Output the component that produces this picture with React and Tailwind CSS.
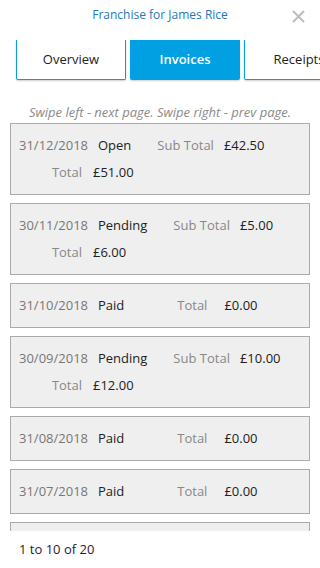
import React from "react";

const invoices = [
  { date: "31/12/2018", status: "Open", sub: "£42.50", total: "£51.00" },
  { date: "30/11/2018", status: "Pending", sub: "£5.00", total: "£6.00" },
  { date: "31/10/2018", status: "Paid", total: "£0.00" },
  { date: "30/09/2018", status: "Pending", sub: "£10.00", total: "£12.00" },
  { date: "31/08/2018", status: "Paid", total: "£0.00" },
  { date: "31/07/2018", status: "Paid", total: "£0.00" },
];

function InvoiceCard({ inv }) {
  const paid = !inv.sub;
  return (
    <div className="shrink-0 border border-[#aaaaaa] bg-[#efefef] py-[8px] pl-[8px] text-[13px]">
      <div className="flex h-[27px] items-center whitespace-nowrap">
        <span className="text-[#777]">{inv.date}</span>
        <span className="ml-[10px] text-[#222]">{inv.status}</span>
        {paid ? (
          <>
            <span className="ml-[53px] text-[#888]">Total</span>
            <span className="ml-[17px] text-[#222]">{inv.total}</span>
          </>
        ) : (
          <>
            <span className="ml-[26px] text-[#888]">Sub Total</span>
            <span className="ml-[10px] text-[#222]">{inv.sub}</span>
          </>
        )}
      </div>
      {!paid && (
        <div className="flex h-[27px] items-center whitespace-nowrap">
          <span className="w-[63px] text-right text-[#888]">Total</span>
          <span className="ml-[11px] text-[#222]">{inv.total}</span>
        </div>
      )}
    </div>
  );
}

export default function App() {
  const tabs = ["Overview", "Invoices", "Receipts"];
  return (
    <div
      className="relative h-[568px] w-[320px] overflow-hidden bg-white"
      style={{ fontFamily: '"Open Sans", "Liberation Sans", sans-serif' }}
    >
      {/* header */}
      <div className="flex h-[30px] items-center justify-center">
        <span className="text-[12px] text-[#1f77bb]">Franchise for James Rice</span>
      </div>
      <button className="absolute right-[15px] top-[10px] h-[13px] w-[13px]">
        <svg viewBox="0 0 13 13" width="13" height="13">
          <path d="M1 1 L12 12 M12 1 L1 12" stroke="#bdbdbd" strokeWidth="2" fill="none" />
        </svg>
      </button>

      <div className="mt-[10px] flex gap-[4px] overflow-hidden pb-[3px] pl-[16px]">
        {tabs.map((t) =>
          t === "Invoices" ? (
            <div
              key={t}
              className="flex h-[40px] w-[110px] shrink-0 items-center justify-center rounded-b-[2px] bg-[#00a0e3] text-[13px] font-semibold text-white shadow-[0_1px_2px_rgba(0,0,0,0.2)]"
            >
              {t}
            </div>
          ) : (
            <div
              key={t}
              className="flex h-[40px] w-[110px] shrink-0 items-center justify-center rounded-b-[2px] border-x border-b border-[#0a9be0] bg-white text-[13px] text-[#222] shadow-[0_1px_2px_rgba(0,0,0,0.2)]"
            >
              {t}
            </div>
          )
        )}
      </div>

      {/* hint */}
      <div className="mt-[19px] h-[20px] whitespace-nowrap text-center text-[13px] italic leading-[20px] text-[#8a8a8a]">
        Swipe left - next page. Swipe right - prev page.
      </div>

      {/* list */}
      <div className="mt-[1px] flex h-[408px] flex-col gap-[8px] overflow-hidden px-[10px]">
        {invoices.map((inv, i) => (
          <InvoiceCard key={i} inv={inv} />
        ))}
        {/* next card, scrolled out of view */}
        <div className="h-[45px] shrink-0 border border-[#aaaaaa] bg-[#efefef]" />
      </div>

      {/* footer */}
      <div className="mt-[8px] pl-[19px] text-[13px] leading-[20px] text-[#2a1a2a]">1 to 10 of 20</div>
    </div>
  );
}
